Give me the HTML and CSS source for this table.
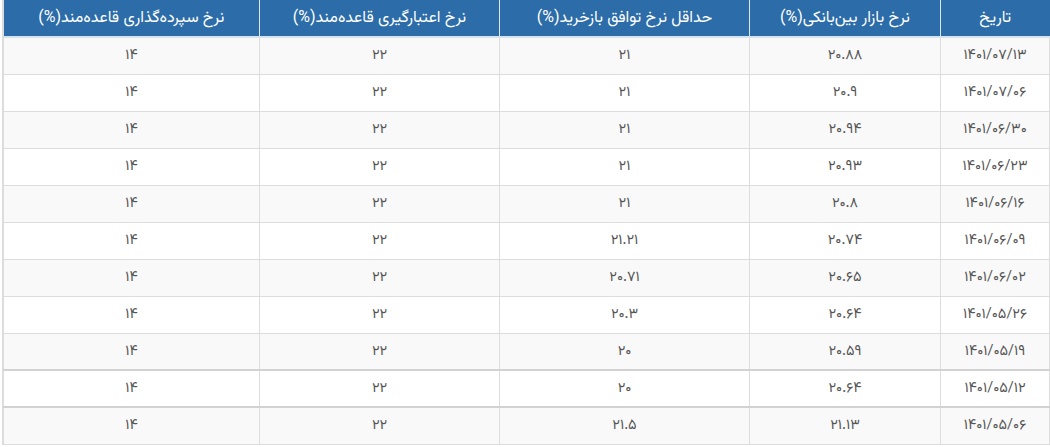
FILE: index.html
```html
<!DOCTYPE html>
<html lang="fa" dir="rtl">
<head>
<meta charset="utf-8">
<link rel="stylesheet" href="styles.css">
</head>
<body>
<div class="wrap">
<table class="rates">
<colgroup>
<col class="c-date"><col class="c-inter"><col class="c-repo"><col class="c-credit"><col class="c-deposit">
</colgroup>
<thead>
<tr><th>تاریخ</th><th>نرخ بازار بین‌بانکی(%)</th><th>حداقل نرخ توافق بازخرید(%)</th><th>نرخ اعتبارگیری قاعده‌مند(%)</th><th>نرخ سپرده‌گذاری قاعده‌مند(%)</th></tr>
</thead>
<tbody>
<tr><td>۱۴۰۱/۰۷/۱۳</td><td>۲۰.۸۸</td><td>۲۱</td><td>۲۲</td><td>۱۴</td></tr>
<tr><td>۱۴۰۱/۰۷/۰۶</td><td>۲۰.۹</td><td>۲۱</td><td>۲۲</td><td>۱۴</td></tr>
<tr><td>۱۴۰۱/۰۶/۳۰</td><td>۲۰.۹۴</td><td>۲۱</td><td>۲۲</td><td>۱۴</td></tr>
<tr><td>۱۴۰۱/۰۶/۲۳</td><td>۲۰.۹۳</td><td>۲۱</td><td>۲۲</td><td>۱۴</td></tr>
<tr><td>۱۴۰۱/۰۶/۱۶</td><td>۲۰.۸</td><td>۲۱</td><td>۲۲</td><td>۱۴</td></tr>
<tr><td>۱۴۰۱/۰۶/۰۹</td><td>۲۰.۷۴</td><td>۲۱.۲۱</td><td>۲۲</td><td>۱۴</td></tr>
<tr><td>۱۴۰۱/۰۶/۰۲</td><td>۲۰.۶۵</td><td>۲۰.۷۱</td><td>۲۲</td><td>۱۴</td></tr>
<tr><td>۱۴۰۱/۰۵/۲۶</td><td>۲۰.۶۴</td><td>۲۰.۳</td><td>۲۲</td><td>۱۴</td></tr>
<tr><td>۱۴۰۱/۰۵/۱۹</td><td>۲۰.۵۹</td><td>۲۰</td><td>۲۲</td><td>۱۴</td></tr>
<tr class="dark"><td>۱۴۰۱/۰۵/۱۲</td><td>۲۰.۶۴</td><td>۲۰</td><td>۲۲</td><td>۱۴</td></tr>
<tr class="dark"><td>۱۴۰۱/۰۵/۰۶</td><td>۲۱.۱۳</td><td>۲۱.۵</td><td>۲۲</td><td>۱۴</td></tr>
</tbody>
</table>
</div>
</body>
</html>
```
FILE: styles.css
```css
html, body {
  margin: 0;
  padding: 0;
  background: #fff;
}
.wrap {
  width: 1048px;
  border-left: 2px solid #dcdcdc;
  box-sizing: border-box;
}
.rates {
  width: 1046px;
  border-collapse: collapse;
  table-layout: fixed;
  font-family: "Vazirmatn", "Noto Sans Arabic", "DejaVu Sans", sans-serif;
}
.c-date { width: 109px; }
.c-inter { width: 191px; }
.c-repo { width: 250px; }
.c-credit { width: 240px; }
.c-deposit { width: 256px; }
.rates th {
  background: #2b6ca9;
  color: #fff;
  font-weight: normal;
  font-size: 16px;
  height: 37px;
  padding: 0 8px;
  text-align: center;
  border-left: 1px solid #dbe6f0;
  border-bottom: 2px solid #d6e2ee;
  box-sizing: border-box;
}
.rates th:last-child { border-left: none; }
.rates td {
  height: 37px;
  padding: 0 8px;
  text-align: center;
  font-size: 14.5px;
  color: #555;
  border: 1px solid #dddddd;
  box-sizing: border-box;
}
.rates td:first-child { border-right: 1px solid #dddddd; }
.rates tbody tr:nth-child(odd) td { background: #f9f9f9; }
.rates tbody tr.dark td { border-top: 2px solid #d2d2d2; }
```
